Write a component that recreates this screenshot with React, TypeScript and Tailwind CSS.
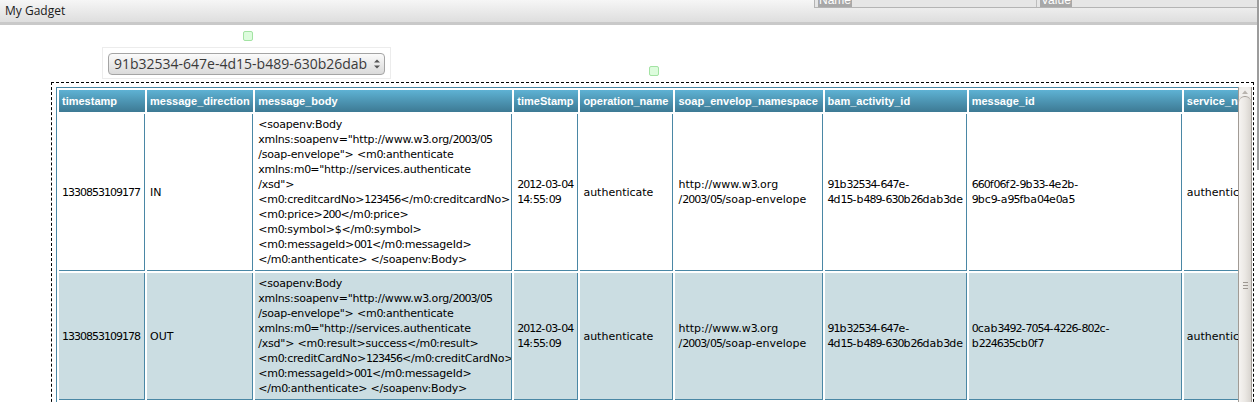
import React from "react";

const D = (s: string) =>
  s.split(/(\d+)/).map((p, i) =>
    /^\d+$/.test(p) ? (
      <span key={i} className="tracking-[-1px]">
        {p}
      </span>
    ) : (
      <React.Fragment key={i}>{p}</React.Fragment>
    )
  );

const Lines = ({ lines }: { lines: string[] }) => (
  <>
    {lines.map((l, i) => (
      <div key={i} className="whitespace-nowrap">
        {D(l)}
      </div>
    ))}
  </>
);

const widths = [86, 106, 257, 64, 93, 147, 142, 213, 110];
const headers = [
  "timestamp",
  "message_direction",
  "message_body",
  "timeStamp",
  "operation_name",
  "soap_envelop_namespace",
  "bam_activity_id",
  "message_id",
  "service_name",
];

type Row = { bg: string; cells: string[][] };

const rows: Row[] = [
  {
    bg: "bg-white",
    cells: [
      ["1330853109177"],
      ["IN"],
      [
        "<soapenv:Body",
        'xmlns:soapenv="http://www.w3.org/2003/05',
        '/soap-envelope"> <m0:anthenticate',
        'xmlns:m0="http://services.authenticate',
        '/xsd">',
        "<m0:creditcardNo>123456</m0:creditcardNo>",
        "<m0:price>200</m0:price>",
        "<m0:symbol>$</m0:symbol>",
        "<m0:messageId>001</m0:messageId>",
        "</m0:anthenticate> </soapenv:Body>",
      ],
      ["2012-03-04", "14:55:09"],
      ["authenticate"],
      ["http://www.w3.org", "/2003/05/soap-envelope"],
      ["91b32534-647e-", "4d15-b489-630b26dab3de"],
      ["660f06f2-9b33-4e2b-", "9bc9-a95fba04e0a5"],
      ["authenticate"],
    ],
  },
  {
    bg: "bg-[#cbdde2]",
    cells: [
      ["1330853109178"],
      ["OUT"],
      [
        "<soapenv:Body",
        'xmlns:soapenv="http://www.w3.org/2003/05',
        '/soap-envelope"> <m0:anthenticate',
        'xmlns:m0="http://services.authenticate',
        '/xsd"> <m0:result>success</m0:result>',
        "<m0:creditCardNo>123456</m0:creditCardNo>",
        "<m0:messageId>001</m0:messageId>",
        "</m0:anthenticate> </soapenv:Body>",
      ],
      ["2012-03-04", "14:55:09"],
      ["authenticate"],
      ["http://www.w3.org", "/2003/05/soap-envelope"],
      ["91b32534-647e-", "4d15-b489-630b26dab3de"],
      ["0cab3492-7054-4226-802c-", "b224635cb0f7"],
      ["authenticate"],
    ],
  },
];

function GreenBox() {
  return <div className="w-[10px] h-[10px] rounded-[2px] border border-[#a3e3a3] bg-[#ddfcdd]" />;
}

export default function App() {
  return (
    <div className="w-[1260px] h-[402px] overflow-hidden bg-white flex font-['DejaVu_Sans',Verdana,sans-serif]">
      <div className="flex-1 flex flex-col min-w-0">
        {/* top bar */}
        <div className="relative h-[25px] shrink-0 border-b-[3px] border-[#c9c9c9] bg-linear-to-b from-[#f6f6f6] to-[#dedede] flex items-center pl-[5px]">
          <span className="font-['Open_Sans',sans-serif] font-medium text-[12px] text-[#1a1a1a] leading-none">My Gadget</span>
          <div className="absolute left-[814px] top-0 right-0 h-[8px] flex border-l border-b border-[#b4b4b4] bg-[#e6e6e6] overflow-hidden font-['Liberation_Sans',Arial,sans-serif] text-[12px] text-white">
            <div className="w-[222px] border-r border-[#bdbdbd] pl-[3px] overflow-hidden">
              <span className="block w-fit mt-[-7px] leading-[14px] bg-[#a8a8a8] px-[1px]">Name</span>
            </div>
            <div className="flex-1 pl-[3px] overflow-hidden">
              <span className="block w-fit mt-[-7px] leading-[14px] bg-[#a8a8a8] px-[1px]">Value</span>
            </div>
          </div>
        </div>

        {/* green handle 1 */}
        <div className="ml-[243px] mt-[6px]">
          <GreenBox />
        </div>

        {/* select row */}
        <div className="flex mt-[6px]">
          <div className="ml-[102px] w-[289px] h-[32px] border border-[#ececec] p-[5px]">
            <div className="h-[22px] rounded-[4px] border border-[#a4a4a4] bg-linear-to-b from-[#fbfbfb] to-[#dadada] flex items-center pl-[5px] pr-[3px] font-['Open_Sans',sans-serif] text-[14px] text-[#3a3a3a] leading-none">
              <span className="flex-1 whitespace-nowrap overflow-hidden">91b32534-647e-4d15-b489-630b26dab</span>
              <svg width="8" height="14" viewBox="0 0 8 14" className="shrink-0">
                <path d="M1 5.5 L4 2.5 L7 5.5 Z" fill="#555" />
                <path d="M1 8.5 L4 11.5 L7 8.5 Z" fill="#555" />
              </svg>
            </div>
          </div>
          <div className="ml-[258px] mt-[19px]">
            <GreenBox />
          </div>
        </div>

        {/* dashed box */}
        <div className="mt-[3px] ml-[51px] mr-[3px] h-[340px] shrink-0 border border-dashed border-black pt-[4px] pl-[4px] pr-[1px] flex">
          <div className="flex-1 min-w-0 overflow-hidden">
            <table className="table-fixed w-[1240px] border-separate border-spacing-[2px] border-l border-t border-[#4a87a5]">
              <colgroup>
                {widths.map((w, i) => (
                  <col key={i} style={{ width: w }} />
                ))}
              </colgroup>
              <thead>
                <tr>
                  {headers.map((h) => (
                    <th
                      key={h}
                      className="h-[22px] p-0 pl-[3px] text-left align-middle whitespace-nowrap overflow-hidden font-['Liberation_Sans',Arial,sans-serif] font-bold text-[11px] text-white bg-linear-to-b from-[#5eb2d4] to-[#3d7a94]"
                    >
                      {h}
                    </th>
                  ))}
                </tr>
              </thead>
              <tbody>
                {rows.map((r, ri) => (
                  <tr key={ri}>
                    {r.cells.map((c, ci) => (
                      <td
                        key={ci}
                        className={`${r.bg} border-r border-b border-[#4a87a5] px-[3px] py-[3px] align-middle overflow-hidden text-[11px] leading-[15px] text-black ${ci === 2 ? "tracking-[-0.2px]" : ""}`}
                      >
                        <Lines lines={c} />
                      </td>
                    ))}
                  </tr>
                ))}
              </tbody>
            </table>
          </div>
          {/* scrollbar */}
          <div className="w-[14px] shrink-0 flex flex-col border-x border-[#a19b95] bg-[#ebe8e4]">
            <div className="h-[9px] shrink-0 rounded-t-[5px] bg-[#f1efec] flex items-center justify-center">
              <svg width="6" height="4" viewBox="0 0 6 4">
                <path d="M0 4 L3 0.5 L6 4 Z" fill="#b9b4ae" />
              </svg>
            </div>
            <div className="flex-1 rounded-t-[6px] border-t border-[#a19b95] bg-linear-to-r from-[#f6f4f2] via-[#ebe8e4] to-[#d8d4cf] flex flex-col items-center">
              <div className="mt-[185px] flex flex-col gap-[2px]">
                <div className="w-[5px] h-px bg-[#9d9791]" />
                <div className="w-[5px] h-px bg-[#9d9791]" />
                <div className="w-[5px] h-px bg-[#9d9791]" />
              </div>
            </div>
          </div>
        </div>
      </div>
      {/* right frame edge */}
      <div className="w-[3px] shrink-0">
        <div className="h-[170px] w-[2px] bg-[#9c9c9c]" />
      </div>
    </div>
  );
}
